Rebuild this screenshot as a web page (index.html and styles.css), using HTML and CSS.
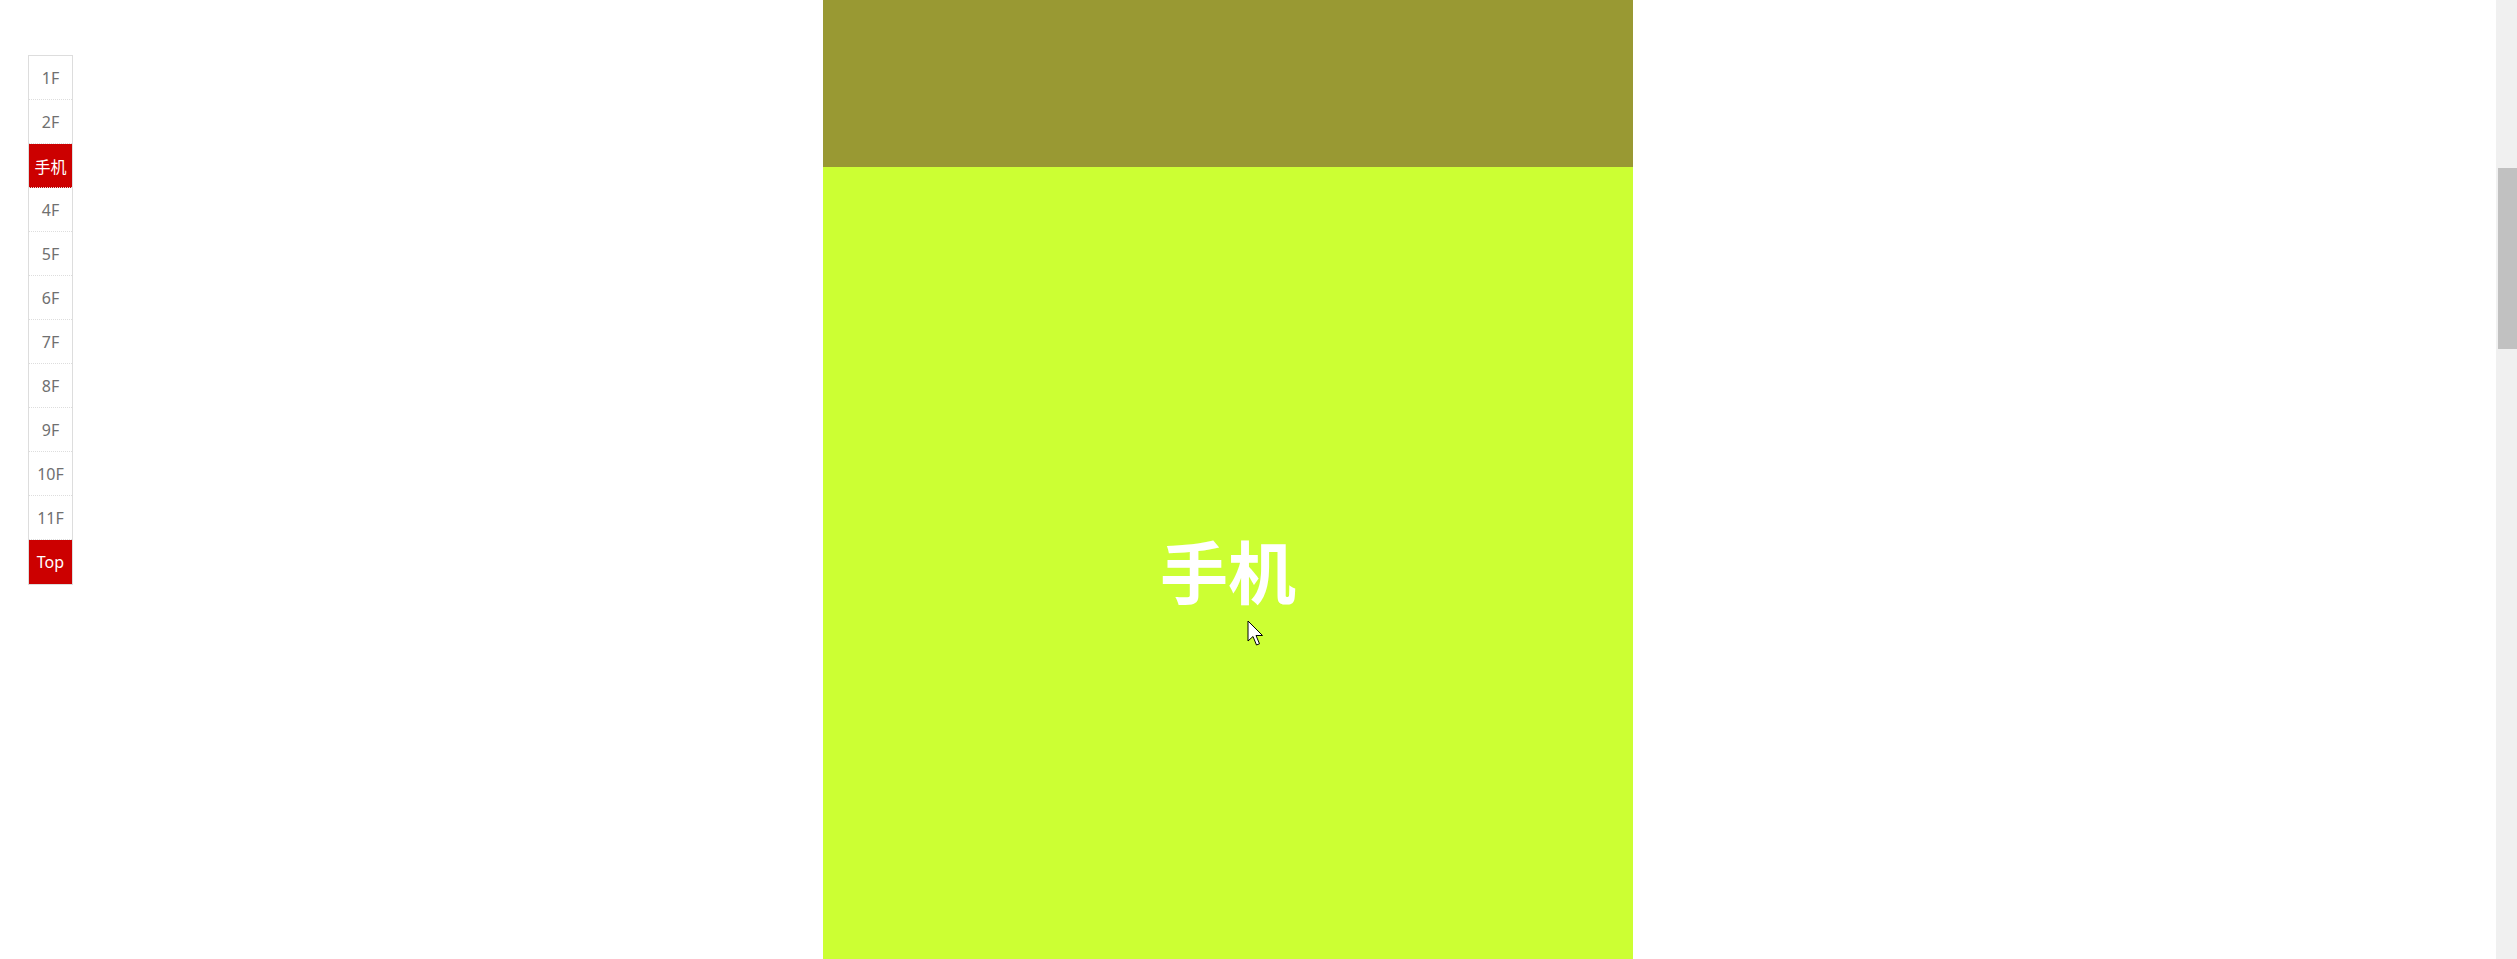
FILE: index.html
```html
<!DOCTYPE html>
<html lang="zh">
<head>
<meta charset="utf-8">
<title>楼层导航</title>
<link rel="stylesheet" href="styles.css">
</head>
<body>
<nav class="floor-nav">
  <a class="floor-item">1F</a>
  <a class="floor-item">2F</a>
  <a class="floor-item active">手机</a>
  <a class="floor-item">4F</a>
  <a class="floor-item">5F</a>
  <a class="floor-item">6F</a>
  <a class="floor-item">7F</a>
  <a class="floor-item">8F</a>
  <a class="floor-item">9F</a>
  <a class="floor-item">10F</a>
  <a class="floor-item">11F</a>
  <a class="floor-item top">Top</a>
</nav>
<main class="floors">
  <section class="floor floor-2"></section>
  <section class="floor floor-3"><h2 class="floor-title">手机</h2></section>
</main>
<div class="scrollbar"><div class="scrollbar-thumb"></div></div>
<svg class="cursor" width="19" height="28" viewBox="0 0 19 28"><path d="M1 1 L1 21 L6 16.5 L9.5 25 L12.5 23.8 L9 15.5 L15.5 15.5 Z" fill="#fff" stroke="#000" stroke-width="1" stroke-linejoin="miter"/></svg>
</body>
</html>
```
FILE: styles.css
```css
html, body {
  margin: 0;
  padding: 0;
  height: 100%;
  overflow: hidden;
  background: #fff;
  font-family: "Noto Sans", "Noto Sans CJK SC", sans-serif;
}

.floor-nav {
  position: fixed;
  left: 28px;
  top: 55px;
  width: 43px;
  border: 1px solid #ddd;
  display: flex;
  flex-direction: column;
  background: #fff;
}

.floor-item {
  display: flex;
  align-items: center;
  justify-content: center;
  height: 43px;
  border-bottom: 1px dotted #ddd;
  font-size: 16px;
  font-weight: 400;
  color: #707070;
  cursor: pointer;
}

.floor-item.active,
.floor-item.top {
  background: #c00;
  color: #fff;
}

.floor-item.active {
  font-size: 16px;
}

.floor-item.top {
  border-bottom: none;
  height: 44px;
  font-size: 16px;
}

.floors {
  margin-left: 823px;
  width: 810px;
  display: flex;
  flex-direction: column;
}

.floor {
  display: flex;
  align-items: center;
  justify-content: center;
}

.floor-2 {
  height: 167px;
  background: #993;
}

.floor-3 {
  height: 806px;
  background: #cf3;
}

.floor-title {
  margin: 0;
  color: #fff;
  font-family: "Noto Sans CJK SC", sans-serif;
  font-weight: 700;
  font-size: 68px;
  line-height: 1;
}

.scrollbar {
  position: fixed;
  top: 0;
  right: 0;
  width: 21px;
  height: 100%;
  background: #f0f0f0;
}

.scrollbar-thumb {
  position: absolute;
  top: 168px;
  left: 2px;
  right: 0;
  height: 181px;
  background: #c1c1c1;
}

.cursor {
  position: fixed;
  left: 1247px;
  top: 620px;
}
```
